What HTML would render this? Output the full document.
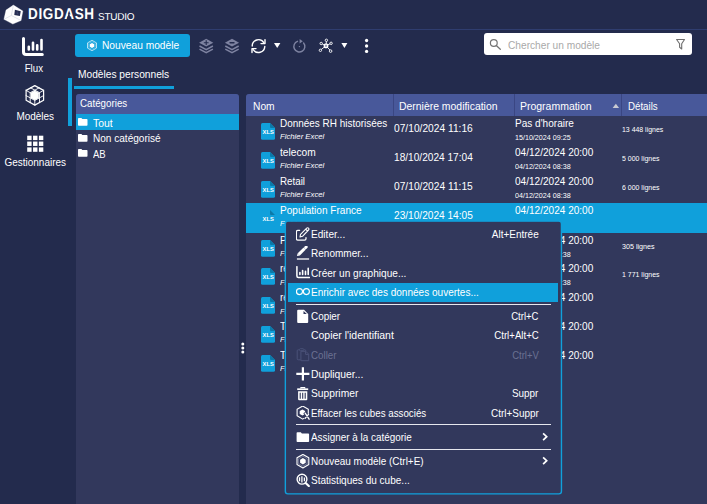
<!DOCTYPE html>
<html lang="fr">
<head>
<meta charset="utf-8">
<title>DigDash Studio</title>
<style>
*{box-sizing:border-box;margin:0;padding:0}
html,body{width:707px;height:504px;overflow:hidden}
body{background:#232b4d;color:#fff;font-family:"Liberation Sans",sans-serif;font-size:10.5px;position:relative}
.abs{position:absolute}
.t{position:absolute;line-height:12px;white-space:nowrap}
.c{position:absolute;line-height:12px;white-space:nowrap;text-align:center}
.topline{position:absolute;left:0;top:29px;width:707px;height:1px;background:#2f3d6f}
.vbar{position:absolute;left:68px;top:78px;width:4px;height:48px;background:#10a0db}
.btn{position:absolute;left:75px;top:34px;width:115px;height:23px;background:#10a0db;border-radius:3px}
.search{position:absolute;left:484px;top:33px;width:208px;height:22px;background:#fff;border-radius:3px;color:#a6a6a6}
.tabline{position:absolute;left:73.6px;top:85.6px;width:100.4px;height:3.5px;background:#10a0db}
.panel{position:absolute;background:#32385c;border-radius:3px 3px 0 0;overflow:hidden}
.phead{position:absolute;left:0;top:0;right:0;background:#48589a}
.cat{position:absolute;left:0;right:0;height:15.5px}
.row{position:absolute;left:0;right:0;height:29.1px}
.colsep{position:absolute;top:0;width:1px;height:22px;background:#3a4683}
.menu{position:absolute;left:286px;top:222px;width:275px;height:272px}
.hl{position:absolute;background:#10a0db}
.msep{position:absolute;left:10px;width:255px;height:1px;background:#e6e7ee}
.dis{color:#6b7192}
</style>
</head>
<body>
<div class="topline"></div>
<svg class="abs" style="left:0;top:0" width="28" height="29" viewBox="0 0 28 29">
  <path d="M13.400 5.100 L22.900 11 L21.100 20.500 L12.800 24.100 L3.900 19.300 L6 10.100 Z" fill="#fff" stroke="#fff" stroke-width="0.300" stroke-linejoin="round"/>
  <path d="M11.300 15.500 L13.400 5.100 M11.300 15.500 L3.900 19.300 M11.300 15.500 L21.100 20.500" stroke="#c9cddb" stroke-width="0.500" fill="none"/>
  <path d="M14.900 9.800 L20.800 11.300 L19.900 16.100 L14.300 14.900 Z" fill="#262e52"/>
  <path d="M17.300 11.600 L17 13.600 L18.400 13.900" stroke="#59608a" stroke-width="0.500" fill="none"/>
</svg>
<span class="t" style="left:28.1px;top:8.30px;font-size:15.5px;font-weight:bold;letter-spacing:0.75px;transform:rotate(0.03deg) scaleX(0.87);transform-origin:0 0">DIGDASH</span>
<svg class="abs" style="left:64px;top:8px" width="14" height="13" viewBox="64 8 14 13"><path d="M68.900 11.700 L70.850 19.400 H66.850 Z" fill="#232b4d"/></svg>
<span class="t" style="left:98.4px;top:11.00px;font-size:10px;letter-spacing:-0.25px;transform:rotate(0.03deg)">STUDIO</span>
<svg class="abs" style="left:0;top:30px" width="70" height="130" viewBox="0 30 70 130">
  <g stroke="#fff" fill="none" stroke-linecap="round">
  <path d="M23.500 38.600 V52 Q23.500 54.600 26.100 54.600 H42.300" stroke-width="3"/>
  <path d="M28.800 46.700 V49.400 M33 42.800 V49.400 M37.200 45.200 V49.400 M41.500 40.100 V49.400" stroke-width="2.600"/>
  </g>
  <path d="M34.800 85.600 L43.600 90.400 V100.300 L34.800 105.100 L26.100 100.300 V90.400 Z" stroke="#fff" stroke-width="1.200" fill="none" stroke-linejoin="round"/>
  <path d="M30.200 87.600 L39.500 92.700 M39.500 87.600 L30.200 92.700 M30.200 92.700 V103.100 M25.600 95.300 L34.800 100.400 M39.500 92.700 V103.100 M44.100 95.300 L34.800 100.400 M34.800 95.300 L25.600 90.100 M34.800 95.300 L44.100 90.100 M34.800 95.300 V105.600" stroke="#fff" stroke-width="0.900" fill="none"/>
  <path d="M34.800 90.700 L38.700 92.800 V97.900 L34.800 99.900 L31 97.900 V92.800 Z" fill="#fff" stroke="#fff" stroke-width="0.500"/>
</svg>
<span class="c" style="left:0px;top:61.70px;font-size:11px;transform:scaleX(0.8806);transform-origin:50% 0;width:67.7px">Flux</span>
<span class="c" style="left:0px;top:110.00px;font-size:11px;transform:scaleX(0.9043);transform-origin:50% 0;width:70.4px">Modèles</span>
<svg class="abs" style="left:0;top:130px" width="70" height="30" viewBox="0 130 70 30"><g fill="#fff"><rect x="27.20" y="135.70" width="4.400" height="4.400"/><rect x="33.05" y="135.70" width="4.400" height="4.400"/><rect x="38.90" y="135.70" width="4.400" height="4.400"/><rect x="27.20" y="141.55" width="4.400" height="4.400"/><rect x="33.05" y="141.55" width="4.400" height="4.400"/><rect x="38.90" y="141.55" width="4.400" height="4.400"/><rect x="27.20" y="147.40" width="4.400" height="4.400"/><rect x="33.05" y="147.40" width="4.400" height="4.400"/><rect x="38.90" y="147.40" width="4.400" height="4.400"/></g></svg>
<span class="c" style="left:0px;top:155.80px;font-size:11px;transform:scaleX(0.9061);transform-origin:50% 0;width:70.5px">Gestionnaires</span>
<div class="vbar"></div>
<div class="btn"></div>
<svg class="abs" style="left:85px;top:38px" width="14" height="15" viewBox="85 38 14 15">
    <path d="M92 40.300 L96.500 42.900 V48.100 L92 50.700 L87.500 48.100 V42.900 Z" stroke="#fff" stroke-opacity="0.850" stroke-width="0.800" fill="none"/>
    <path d="M92 41.600 L95.400 43.550 V47.450 L92 49.400 L88.600 47.450 V43.550 Z" stroke="#fff" stroke-opacity="0.450" stroke-width="0.600" fill="none"/>
    <path d="M92 42.900 L94.300 44.200 V46.800 L92 48.100 L89.700 46.800 V44.200 Z" fill="#fff"/>
  </svg>
<span class="t" style="left:101.9px;top:38.70px;font-size:11px;transform:scaleX(0.9271);transform-origin:0 0;">Nouveau modèle</span>
<svg class="abs" style="left:195px;top:34px" width="180" height="24" viewBox="195 34 180 24">
<g fill="#7e83a1"><path d="M206.200 38.800 L213.300 42.700 L206.200 46.600 L199.100 42.700 Z"/><path d="M232 38.800 L239.100 42.700 L232 46.600 L224.900 42.700 Z"/></g>
<g stroke="#7e83a1" stroke-width="1.500" fill="none"><path d="M199.500 46 L206.200 49.600 L212.900 46 M199.500 49.100 L206.200 52.700 L212.900 49.100"/><path d="M225.300 46 L232 49.600 L238.700 46 M225.300 49.100 L232 52.700 L238.700 49.100"/></g>
<path d="M206.200 40.300 V45.100 M203.800 42.700 H208.600" stroke="#232b4d" stroke-width="1.100"/>
<rect x="229.300" y="41.900" width="5.400" height="1.700" rx="0.800" fill="#232b4d"/>
<g stroke="#fff" stroke-width="1.400" fill="none" stroke-linecap="round" stroke-linejoin="round"><path d="M252.200 46 A6.300 6.300 0 0 1 263.800 42.600"/><path d="M265 39.600 V43.600 H261"/><path d="M264.800 46.500 A6.300 6.300 0 0 1 253.200 49.600"/><path d="M252 52.600 V48.600 H256"/></g>
<path d="M274 43.100 H280.400 L277.200 47.900 Z" fill="#fff"/>
<g stroke="#7e83a1" stroke-width="1.400" fill="none" stroke-linecap="round"><path d="M303.600 43 A5.500 5.500 0 1 1 297.500 41.300"/></g>
<path d="M299.600 38.900 L302.800 41.200 L299.600 43.400 Z" fill="#7e83a1"/>
<circle cx="299.400" cy="46.600" r="0.700" fill="#7e83a1"/>
<g stroke="#fff" stroke-width="0.900" fill="none"><path d="M326 45.800 L326.400 41.500 M326 45.800 L322.300 44 M326 45.800 L330 43.800 M326 45.800 L321.200 49.500 M326 45.800 L329.900 50"/><circle cx="326.400" cy="40.300" r="1.200"/><circle cx="321.200" cy="43.500" r="1.200"/><circle cx="331.100" cy="43.300" r="1.200"/><circle cx="320.400" cy="50.300" r="1.200"/><circle cx="330.600" cy="51.100" r="1.300"/></g>
<rect x="324.300" y="44.100" width="3.400" height="3.400" rx="0.900" fill="#9a9fb6" stroke="#fff" stroke-width="1.300"/>
<path d="M341.400 43.100 H347.400 L344.400 47.900 Z" fill="#fff"/>
<circle cx="366.600" cy="40.500" r="1.650" fill="#fff"/><circle cx="366.600" cy="46" r="1.650" fill="#fff"/><circle cx="366.600" cy="51.400" r="1.650" fill="#fff"/>
</svg>

<div class="search"></div>
<svg class="abs" style="left:488px;top:37px" width="15" height="15" viewBox="488 37 15 15"><circle cx="493.800" cy="43" r="3.400" stroke="#747474" stroke-width="1.200" fill="none"/><path d="M496.300 45.600 L500.300 49.200" stroke="#747474" stroke-width="1.300" stroke-linecap="round"/></svg>
<span class="t" style="left:508px;top:38.60px;font-size:11px;transform:scaleX(0.9230);transform-origin:0 0;color:#a9a9a9">Chercher un modèle</span>
<svg class="abs" style="left:674px;top:37px" width="16" height="16" viewBox="674 37 16 16"><path d="M676.600 39.500 H684.500 L681.700 43.800 V49 L679.600 47.300 V43.800 Z" stroke="#6e6e6e" stroke-width="1.100" fill="none" stroke-linejoin="round"/></svg>
<span class="t" style="left:77.9px;top:68.20px;font-size:11px;transform:scaleX(0.9264);transform-origin:0 0;">Modèles personnels</span>
<div class="tabline"></div>
<div class="panel" style="left:76px;top:94px;width:163px;height:410px">
<div class="phead" style="height:20.3px"></div>
<span class="t" style="left:3.8px;top:3.00px;font-size:11px;transform:scaleX(0.8872);transform-origin:0 0;">Catégories</span>
<div class="hl" style="left:0;right:0;top:20.3px;height:15.5px"></div>
<svg class="abs" style="left:2px;top:24.2px" width="10" height="8" viewBox="0 0 10 8"><path d="M0 0.800 Q0 0 0.800 0 H3.400 L4.300 1 H8.700 Q9.500 1 9.500 1.800 V7 Q9.500 7.800 8.700 7.800 H0.800 Q0 7.800 0 7 Z" fill="#fff"/></svg>
<span class="t" style="left:16.6px;top:22.80px;font-size:11px;transform:scaleX(0.9450);transform-origin:0 0;">Tout</span>
<svg class="abs" style="left:2px;top:39.7px" width="10" height="8" viewBox="0 0 10 8"><path d="M0 0.800 Q0 0 0.800 0 H3.400 L4.300 1 H8.700 Q9.500 1 9.500 1.800 V7 Q9.500 7.800 8.700 7.800 H0.800 Q0 7.800 0 7 Z" fill="#fff"/></svg>
<span class="t" style="left:16.6px;top:38.30px;font-size:11px;transform:scaleX(0.9136);transform-origin:0 0;">Non catégorisé</span>
<svg class="abs" style="left:2px;top:55.2px" width="10" height="8" viewBox="0 0 10 8"><path d="M0 0.800 Q0 0 0.800 0 H3.400 L4.300 1 H8.700 Q9.500 1 9.500 1.800 V7 Q9.500 7.800 8.700 7.800 H0.800 Q0 7.800 0 7 Z" fill="#fff"/></svg>
<span class="t" style="left:16.6px;top:53.80px;font-size:11px;transform:scaleX(0.8650);transform-origin:0 0;">AB</span>
</div>
<svg class="abs" style="left:240px;top:341px" width="6" height="14" viewBox="240 341 6 14"><circle cx="242.800" cy="344" r="1.500" fill="#fff"/><circle cx="242.800" cy="348" r="1.500" fill="#fff"/><circle cx="242.800" cy="351.900" r="1.500" fill="#fff"/></svg>
<div class="panel" style="left:246px;top:94px;width:461px;height:410px;border-radius:3px 0 0 0">
<div class="phead" style="height:22px"></div>
<div class="colsep" style="left:147px"></div>
<div class="colsep" style="left:268px"></div>
<div class="colsep" style="left:375px"></div>
<span class="t" style="left:6.7px;top:5.70px;font-size:11.5px;transform:scaleX(0.8901);transform-origin:0 0;">Nom</span>
<span class="t" style="left:153.2px;top:5.70px;font-size:11.5px;transform:scaleX(0.9065);transform-origin:0 0;">Dernière modification</span>
<span class="t" style="left:274.1px;top:5.70px;font-size:11.5px;transform:scaleX(0.9107);transform-origin:0 0;">Programmation</span>
<svg class="abs" style="left:366px;top:9px" width="8" height="6" viewBox="0 0 8 6"><path d="M0.600 5.100 L3.850 0.700 L7.100 5.100 Z" fill="#c9cad2"/></svg>
<span class="t" style="left:381.9px;top:5.70px;font-size:11.5px;transform:scaleX(0.8451);transform-origin:0 0;">Détails</span>
<svg class="abs" style="left:15px;top:29.0px" width="14" height="17" viewBox="0 0 14 17"><path d="M1.500 0 H9 L14 5 V15.200 Q14 16.700 12.500 16.700 H1.500 Q0 16.700 0 15.200 V1.500 Q0 0 1.500 0 Z" fill="#10a0db"/><path d="M9 0 L14 5 H10 Q9 5 9 4 Z" fill="#0b79a8"/><text x="7.200" y="10.500" font-family="Liberation Sans,sans-serif" font-size="5.800" font-weight="bold" fill="#fff" text-anchor="middle">XLS</text></svg>
<span class="t" style="left:34.3px;top:22.90px;font-size:11px;transform:scaleX(0.9037);transform-origin:0 0;">Données RH historisées</span>
<span class="t" style="left:34.3px;top:37.30px;font-size:8px;transform:scaleX(0.9674);transform-origin:0 0;font-style:italic">Fichier Excel</span>
<span class="t" style="left:147.5px;top:27.80px;font-size:11px;transform:scaleX(0.9289);transform-origin:0 0;">07/10/2024 11:16</span>
<span class="t" style="left:269px;top:22.90px;font-size:11px;transform:scaleX(0.9134);transform-origin:0 0;">Pas d'horaire</span>
<span class="t" style="left:269px;top:37.90px;font-size:7.5px;transform:scaleX(0.9522);transform-origin:0 0;">15/10/2024 09:25</span>
<span class="t" style="left:375.7px;top:30.00px;font-size:7.5px;transform:scaleX(0.9235);transform-origin:0 0;">13 448 lignes</span>
<svg class="abs" style="left:15px;top:57.9px" width="14" height="17" viewBox="0 0 14 17"><path d="M1.500 0 H9 L14 5 V15.200 Q14 16.700 12.500 16.700 H1.500 Q0 16.700 0 15.200 V1.500 Q0 0 1.500 0 Z" fill="#10a0db"/><path d="M9 0 L14 5 H10 Q9 5 9 4 Z" fill="#0b79a8"/><text x="7.200" y="10.500" font-family="Liberation Sans,sans-serif" font-size="5.800" font-weight="bold" fill="#fff" text-anchor="middle">XLS</text></svg>
<span class="t" style="left:34.3px;top:51.75px;font-size:11px;transform:scaleX(0.9266);transform-origin:0 0;">telecom</span>
<span class="t" style="left:34.3px;top:66.15px;font-size:8px;transform:scaleX(0.9674);transform-origin:0 0;font-style:italic">Fichier Excel</span>
<span class="t" style="left:147.5px;top:56.65px;font-size:11px;transform:scaleX(0.9201);transform-origin:0 0;">18/10/2024 17:04</span>
<span class="t" style="left:269px;top:51.75px;font-size:11px;transform:scaleX(0.9143);transform-origin:0 0;">04/12/2024 20:00</span>
<span class="t" style="left:269px;top:66.75px;font-size:7.5px;transform:scaleX(0.9522);transform-origin:0 0;">04/12/2024 08:38</span>
<span class="t" style="left:375.7px;top:58.85px;font-size:7.5px;transform:scaleX(0.9273);transform-origin:0 0;">5 000 lignes</span>
<svg class="abs" style="left:15px;top:86.7px" width="14" height="17" viewBox="0 0 14 17"><path d="M1.500 0 H9 L14 5 V15.200 Q14 16.700 12.500 16.700 H1.500 Q0 16.700 0 15.200 V1.500 Q0 0 1.500 0 Z" fill="#10a0db"/><path d="M9 0 L14 5 H10 Q9 5 9 4 Z" fill="#0b79a8"/><text x="7.200" y="10.500" font-family="Liberation Sans,sans-serif" font-size="5.800" font-weight="bold" fill="#fff" text-anchor="middle">XLS</text></svg>
<span class="t" style="left:34.3px;top:80.60px;font-size:11px;transform:scaleX(0.8890);transform-origin:0 0;">Retail</span>
<span class="t" style="left:34.3px;top:95.00px;font-size:8px;transform:scaleX(0.9674);transform-origin:0 0;font-style:italic">Fichier Excel</span>
<span class="t" style="left:147.5px;top:85.50px;font-size:11px;transform:scaleX(0.9289);transform-origin:0 0;">07/10/2024 11:15</span>
<span class="t" style="left:269px;top:80.60px;font-size:11px;transform:scaleX(0.9143);transform-origin:0 0;">04/12/2024 20:00</span>
<span class="t" style="left:269px;top:95.60px;font-size:7.5px;transform:scaleX(0.9522);transform-origin:0 0;">04/12/2024 08:38</span>
<span class="t" style="left:375.7px;top:87.70px;font-size:7.5px;transform:scaleX(0.9273);transform-origin:0 0;">6 000 lignes</span>
<div class="hl" style="left:0;right:0;top:108.6px;height:30.2px"></div>
<svg class="abs" style="left:15px;top:116.1px" width="14" height="17" viewBox="0 0 14 17"><path d="M1.500 0 H9 L14 5 V15.200 Q14 16.700 12.500 16.700 H1.500 Q0 16.700 0 15.200 V1.500 Q0 0 1.500 0 Z" fill="#10a0db"/><path d="M9 0 L14 5 H10 Q9 5 9 4 Z" fill="#0b79a8"/><text x="7.200" y="10.500" font-family="Liberation Sans,sans-serif" font-size="5.800" font-weight="bold" fill="#fff" text-anchor="middle">XLS</text></svg>
<span class="t" style="left:34.3px;top:109.95px;font-size:11px;transform:scaleX(0.9140);transform-origin:0 0;">Population France</span>
<span class="t" style="left:34.3px;top:124.35px;font-size:8px;transform:scaleX(0.9674);transform-origin:0 0;font-style:italic">Fichier Excel</span>
<span class="t" style="left:147.5px;top:114.85px;font-size:11px;transform:scaleX(0.9201);transform-origin:0 0;">23/10/2024 14:05</span>
<span class="t" style="left:269px;top:109.95px;font-size:11px;transform:scaleX(0.9143);transform-origin:0 0;">04/12/2024 20:00</span>
<svg class="abs" style="left:15px;top:145.6px" width="14" height="17" viewBox="0 0 14 17"><path d="M1.500 0 H9 L14 5 V15.200 Q14 16.700 12.500 16.700 H1.500 Q0 16.700 0 15.200 V1.500 Q0 0 1.500 0 Z" fill="#10a0db"/><path d="M9 0 L14 5 H10 Q9 5 9 4 Z" fill="#0b79a8"/><text x="7.200" y="10.500" font-family="Liberation Sans,sans-serif" font-size="5.800" font-weight="bold" fill="#fff" text-anchor="middle">XLS</text></svg>
<span class="t" style="left:34.3px;top:139.50px;font-size:11px;transform:scaleX(0.9050);transform-origin:0 0;">Population</span>
<span class="t" style="left:34.3px;top:153.90px;font-size:8px;transform:scaleX(0.9674);transform-origin:0 0;font-style:italic">Fichier Excel</span>
<span class="t" style="left:147.5px;top:144.40px;font-size:11px;transform:scaleX(0.9201);transform-origin:0 0;">23/10/2024 14:05</span>
<span class="t" style="left:269px;top:139.50px;font-size:11px;transform:scaleX(0.9143);transform-origin:0 0;">04/12/2024 20:00</span>
<span class="t" style="left:269px;top:154.50px;font-size:7.5px;transform:scaleX(0.9522);transform-origin:0 0;">04/12/2024 08:38</span>
<span class="t" style="left:375.7px;top:146.60px;font-size:7.5px;transform:scaleX(0.9535);transform-origin:0 0;">305 lignes</span>
<svg class="abs" style="left:15px;top:174.4px" width="14" height="17" viewBox="0 0 14 17"><path d="M1.500 0 H9 L14 5 V15.200 Q14 16.700 12.500 16.700 H1.500 Q0 16.700 0 15.200 V1.500 Q0 0 1.500 0 Z" fill="#10a0db"/><path d="M9 0 L14 5 H10 Q9 5 9 4 Z" fill="#0b79a8"/><text x="7.200" y="10.500" font-family="Liberation Sans,sans-serif" font-size="5.800" font-weight="bold" fill="#fff" text-anchor="middle">XLS</text></svg>
<span class="t" style="left:34.3px;top:168.35px;font-size:11px;transform:scaleX(0.9050);transform-origin:0 0;">regions</span>
<span class="t" style="left:34.3px;top:182.75px;font-size:8px;transform:scaleX(0.9674);transform-origin:0 0;font-style:italic">Fichier Excel</span>
<span class="t" style="left:147.5px;top:173.25px;font-size:11px;transform:scaleX(0.9201);transform-origin:0 0;">23/10/2024 14:05</span>
<span class="t" style="left:269px;top:168.35px;font-size:11px;transform:scaleX(0.9143);transform-origin:0 0;">04/12/2024 20:00</span>
<span class="t" style="left:269px;top:183.35px;font-size:7.5px;transform:scaleX(0.9522);transform-origin:0 0;">04/12/2024 08:38</span>
<span class="t" style="left:375.7px;top:175.45px;font-size:7.5px;transform:scaleX(0.9273);transform-origin:0 0;">1 771 lignes</span>
<svg class="abs" style="left:15px;top:203.3px" width="14" height="17" viewBox="0 0 14 17"><path d="M1.500 0 H9 L14 5 V15.200 Q14 16.700 12.500 16.700 H1.500 Q0 16.700 0 15.200 V1.500 Q0 0 1.500 0 Z" fill="#10a0db"/><path d="M9 0 L14 5 H10 Q9 5 9 4 Z" fill="#0b79a8"/><text x="7.200" y="10.500" font-family="Liberation Sans,sans-serif" font-size="5.800" font-weight="bold" fill="#fff" text-anchor="middle">XLS</text></svg>
<span class="t" style="left:34.3px;top:197.20px;font-size:11px;transform:scaleX(0.9050);transform-origin:0 0;">regions2</span>
<span class="t" style="left:34.3px;top:211.60px;font-size:8px;transform:scaleX(0.9674);transform-origin:0 0;font-style:italic">Fichier Excel</span>
<span class="t" style="left:147.5px;top:202.10px;font-size:11px;transform:scaleX(0.9201);transform-origin:0 0;">23/10/2024 14:05</span>
<span class="t" style="left:269px;top:197.20px;font-size:11px;transform:scaleX(0.9143);transform-origin:0 0;">04/12/2024 20:00</span>
<svg class="abs" style="left:15px;top:232.2px" width="14" height="17" viewBox="0 0 14 17"><path d="M1.500 0 H9 L14 5 V15.200 Q14 16.700 12.500 16.700 H1.500 Q0 16.700 0 15.200 V1.500 Q0 0 1.500 0 Z" fill="#10a0db"/><path d="M9 0 L14 5 H10 Q9 5 9 4 Z" fill="#0b79a8"/><text x="7.200" y="10.500" font-family="Liberation Sans,sans-serif" font-size="5.800" font-weight="bold" fill="#fff" text-anchor="middle">XLS</text></svg>
<span class="t" style="left:34.3px;top:226.05px;font-size:11px;transform:scaleX(0.9050);transform-origin:0 0;">Test</span>
<span class="t" style="left:34.3px;top:240.45px;font-size:8px;transform:scaleX(0.9674);transform-origin:0 0;font-style:italic">Fichier Excel</span>
<span class="t" style="left:147.5px;top:230.95px;font-size:11px;transform:scaleX(0.9201);transform-origin:0 0;">23/10/2024 14:05</span>
<span class="t" style="left:269px;top:226.05px;font-size:11px;transform:scaleX(0.9143);transform-origin:0 0;">04/12/2024 20:00</span>
<svg class="abs" style="left:15px;top:261.0px" width="14" height="17" viewBox="0 0 14 17"><path d="M1.500 0 H9 L14 5 V15.200 Q14 16.700 12.500 16.700 H1.500 Q0 16.700 0 15.200 V1.500 Q0 0 1.500 0 Z" fill="#10a0db"/><path d="M9 0 L14 5 H10 Q9 5 9 4 Z" fill="#0b79a8"/><text x="7.200" y="10.500" font-family="Liberation Sans,sans-serif" font-size="5.800" font-weight="bold" fill="#fff" text-anchor="middle">XLS</text></svg>
<span class="t" style="left:34.3px;top:254.90px;font-size:11px;transform:scaleX(0.9050);transform-origin:0 0;">Test2</span>
<span class="t" style="left:34.3px;top:269.30px;font-size:8px;transform:scaleX(0.9674);transform-origin:0 0;font-style:italic">Fichier Excel</span>
<span class="t" style="left:147.5px;top:259.80px;font-size:11px;transform:scaleX(0.9201);transform-origin:0 0;">23/10/2024 14:05</span>
<span class="t" style="left:269px;top:254.90px;font-size:11px;transform:scaleX(0.9143);transform-origin:0 0;">04/12/2024 20:00</span>
</div>
<svg class="abs" style="left:283px;top:219px" width="282" height="279" viewBox="283 219 282 279"><rect x="285.35" y="221.15" width="276.1" height="272.75" rx="2.6" fill="#32385c" stroke="#10a0db" stroke-width="1.4"/></svg>
<div class="menu">
<svg class="abs" style="left:9.7px;top:5.0px" width="14" height="14" viewBox="0 0 14 14"><path d="M3.600 3.400 H1.800 Q0.400 3.400 0.400 4.800 V11.700 Q0.400 13.100 1.800 13.100 H8.600 Q10 13.100 10 11.700 V10.600" stroke="#fff" stroke-width="1.250" fill="none" stroke-linecap="round"/><path d="M4 10 L4.500 7.400 L10.700 1.200 Q11.600 0.300 12.500 1.200 Q13.400 2.100 12.500 3 L6.500 9.300 Z M9.700 2.200 L11.500 4" stroke="#fff" stroke-width="1.100" fill="none" stroke-linejoin="round"/></svg>
<span class="t" style="left:25.19999999999999px;top:5.70px;font-size:11px;transform:scaleX(0.9173);transform-origin:0 0;">Editer...</span>
<span class="t" style="right:22.399999999999977px;top:5.70px;font-size:11px;transform:scaleX(0.9057);transform-origin:100% 0;">Alt+Entrée</span>
<svg class="abs" style="left:9.7px;top:24.4px" width="14" height="14" viewBox="0 0 14 14"><path d="M0.900 10 L1.700 7.200 L4 9.400 Z" fill="#fff"/><path d="M2.800 8.300 L8.700 2.500" stroke="#fff" stroke-width="3.100"/><path d="M9.700 1.500 L10.200 1" stroke="#fff" stroke-width="3" stroke-linecap="round"/><path d="M0.900 13 H13.100" stroke="#fff" stroke-width="1.300"/></svg>
<span class="t" style="left:25.19999999999999px;top:25.10px;font-size:11px;transform:scaleX(0.9118);transform-origin:0 0;">Renommer...</span>
<svg class="abs" style="left:9.7px;top:43.8px" width="14" height="14" viewBox="0 0 14 14"><path d="M0.900 0.700 V10 Q0.900 11.500 2.400 11.500 H13.400" stroke="#fff" stroke-width="1.500" fill="none" stroke-linecap="round"/><path d="M3.900 6.600 V8.400 M6.600 4.500 V8.400 M9.500 5.400 V8.400 M12.200 2.400 V8.400" stroke="#fff" stroke-width="1.600" stroke-linecap="round"/></svg>
<span class="t" style="left:25.19999999999999px;top:44.50px;font-size:11px;transform:scaleX(0.9169);transform-origin:0 0;">Créer un graphique...</span>
<div class="hl" style="left:2.4px;width:269.7px;top:60.5px;height:19.4px"></div>
<svg class="abs" style="left:9.7px;top:66.4px" width="15" height="8" viewBox="0 0 15 8"><circle cx="3.500" cy="3.600" r="3" stroke="#fff" stroke-width="1.100" fill="none"/><circle cx="10.400" cy="3.600" r="3" stroke="#fff" stroke-width="1.100" fill="none"/></svg>
<span class="t" style="left:25.19999999999999px;top:63.90px;font-size:11px;transform:scaleX(0.9118);transform-origin:0 0;">Enrichir avec des données ouvertes...</span>
<div class="msep" style="top:82.1px"></div>
<svg class="abs" style="left:9.7px;top:87.1px" width="14" height="15" viewBox="0 0 14 15"><path d="M2.200 0.700 H8 L12.200 5 V13.100 Q12.200 14.100 11.200 14.100 H2.200 Q1.200 14.100 1.200 13.100 V1.700 Q1.200 0.700 2.200 0.700 Z" fill="#fff"/><path d="M7.500 1.900 V5 H10.800 Z" fill="#32385c"/></svg>
<span class="t" style="left:25.19999999999999px;top:87.80px;font-size:11px;transform:scaleX(0.8984);transform-origin:0 0;">Copier</span>
<span class="t" style="right:22.399999999999977px;top:87.80px;font-size:11px;transform:scaleX(0.8650);transform-origin:100% 0;">Ctrl+C</span>
<span class="t" style="left:25.19999999999999px;top:107.20px;font-size:11px;transform:scaleX(0.9508);transform-origin:0 0;">Copier l'identifiant</span>
<span class="t" style="right:22.399999999999977px;top:107.20px;font-size:11px;transform:scaleX(0.8768);transform-origin:100% 0;">Ctrl+Alt+C</span>
<svg class="abs" style="left:9.7px;top:125.9px" width="14" height="14" viewBox="0 0 14 14"><path d="M3.500 1.800 H2.200 Q1.200 1.800 1.200 2.800 V10.800 Q1.200 11.800 2.200 11.800 H4.600 M8 1.800 H8.800 Q9.800 1.800 9.800 2.800 V3.200" stroke="#4b5279" stroke-width="1" fill="none"/><rect x="3.600" y="0.700" width="4.200" height="2" rx="0.700" stroke="#4b5279" stroke-width="0.900" fill="none"/><path d="M4.900 3.300 H9.800 L12.700 6.200 V12.700 H4.900 Z M9.600 3.500 V6.400 H12.500" stroke="#4b5279" stroke-width="1" fill="none" stroke-linejoin="round"/></svg>
<span class="t dis" style="left:25.19999999999999px;top:126.60px;font-size:11px;transform:scaleX(0.8879);transform-origin:0 0;">Coller</span>
<span class="t dis" style="right:22.399999999999977px;top:126.60px;font-size:11px;transform:scaleX(0.8650);transform-origin:100% 0;">Ctrl+V</span>
<svg class="abs" style="left:9.7px;top:145.3px" width="14" height="14" viewBox="0 0 14 14"><path d="M6.900 0.200 V13.400 M0.300 6.900 H13.400" stroke="#fff" stroke-width="2.200"/></svg>
<span class="t" style="left:25.19999999999999px;top:146.00px;font-size:11px;transform:scaleX(0.9399);transform-origin:0 0;">Dupliquer...</span>
<svg class="abs" style="left:9.7px;top:164.7px" width="14" height="14" viewBox="0 0 14 14"><path d="M1.200 2.200 H12.200" stroke="#fff" stroke-width="1.700"/><path d="M4.900 1.500 V0.500 H8.700 V1.500" stroke="#fff" stroke-width="1.100" fill="none"/><path d="M2.100 4.200 H11.300 V12.200 Q11.300 13.200 10.300 13.200 H3.100 Q2.100 13.200 2.100 12.200 Z" fill="#fff"/><path d="M4.200 5.700 V11.700 M6.700 5.700 V11.700 M9.200 5.700 V11.700" stroke="#32385c" stroke-width="1.100"/></svg>
<span class="t" style="left:25.19999999999999px;top:165.40px;font-size:11px;transform:scaleX(0.9323);transform-origin:0 0;">Supprimer</span>
<span class="t" style="right:22.399999999999977px;top:165.40px;font-size:11px;transform:scaleX(0.8992);transform-origin:100% 0;">Suppr</span>
<svg class="abs" style="left:9.7px;top:184.1px" width="14" height="14" viewBox="0 0 14 14"><path d="M6.700 0 L12.300 3.200 V9.800 L6.700 13.100 L1.100 9.800 V3.200 Z" stroke="#fff" stroke-width="1.100" fill="none" stroke-linejoin="round"/><path d="M6.400 3.500 L9.100 5 V8 L6.400 9.500 L3.700 8 V5 Z" fill="#fff"/><path d="M8.400 6.500 L13.300 13.400 M12.800 8 L8.800 12.600" stroke="#32385c" stroke-width="2.600"/><path d="M9.200 7.200 L13.100 13.200 M12.500 8.300 L9.300 12.200" stroke="#fff" stroke-width="1.300" stroke-linecap="round"/></svg>
<span class="t" style="left:25.19999999999999px;top:184.80px;font-size:11px;transform:scaleX(0.8860);transform-origin:0 0;">Effacer les cubes associés</span>
<span class="t" style="right:22.399999999999977px;top:184.80px;font-size:11px;transform:scaleX(0.9038);transform-origin:100% 0;">Ctrl+Suppr</span>
<div class="msep" style="top:202.3px"></div>
<svg class="abs" style="left:9.7px;top:209.5px" width="14" height="11" viewBox="0 0 14 11"><path d="M0.600 1.100 Q0.600 0.300 1.400 0.300 H4.800 L5.900 1.500 H12.300 Q13.100 1.500 13.100 2.300 V9.300 Q13.100 10.100 12.300 10.100 H1.400 Q0.600 10.100 0.600 9.300 Z" fill="#fff"/></svg>
<span class="t" style="left:25.19999999999999px;top:208.70px;font-size:11px;transform:scaleX(0.9000);transform-origin:0 0;">Assigner à la catégorie</span>
<svg class="abs" style="left:256.2px;top:210.0px" width="7" height="10" viewBox="0 0 7 10"><path d="M1.100 1.300 L4.700 4.700 L1.100 8.100" stroke="#fff" stroke-width="1.700" fill="none"/></svg>
<div class="msep" style="top:226.9px"></div>
<svg class="abs" style="left:9.7px;top:231.9px" width="14" height="15" viewBox="0 0 14 15"><path d="M6.900 0.400 L12.800 3.800 V10.600 L6.900 14 L1 10.600 V3.800 Z" stroke="#fff" stroke-width="1.100" fill="none" stroke-linejoin="round"/><path d="M6.900 2.200 L11.200 4.700 V9.700 L6.900 12.200 L2.600 9.700 V4.700 Z" stroke="#aeb3c8" stroke-width="0.500" fill="none"/><path d="M6.900 4.100 L9.700 5.700 V8.800 L6.900 10.400 L4.100 8.800 V5.700 Z" fill="#fff"/></svg>
<span class="t" style="left:25.19999999999999px;top:232.60px;font-size:11px;transform:scaleX(0.9051);transform-origin:0 0;">Nouveau modèle (Ctrl+E)</span>
<svg class="abs" style="left:256.2px;top:233.9px" width="7" height="10" viewBox="0 0 7 10"><path d="M1.100 1.300 L4.700 4.700 L1.100 8.100" stroke="#fff" stroke-width="1.700" fill="none"/></svg>
<svg class="abs" style="left:9.7px;top:251.3px" width="14" height="14" viewBox="0 0 14 14"><circle cx="6" cy="6.200" r="4.900" stroke="#fff" stroke-width="1.400" fill="none"/><path d="M3.500 4.300 V8.300 M5.900 3.200 V9.500 M8.400 4.600 V8.300" stroke="#fff" stroke-width="1.300"/><path d="M9.900 10.200 L12.800 13" stroke="#fff" stroke-width="2.200" stroke-linecap="round"/></svg>
<span class="t" style="left:25.19999999999999px;top:252.00px;font-size:11px;transform:scaleX(0.9120);transform-origin:0 0;">Statistiques du cube...</span>
</div>
</body>
</html>
